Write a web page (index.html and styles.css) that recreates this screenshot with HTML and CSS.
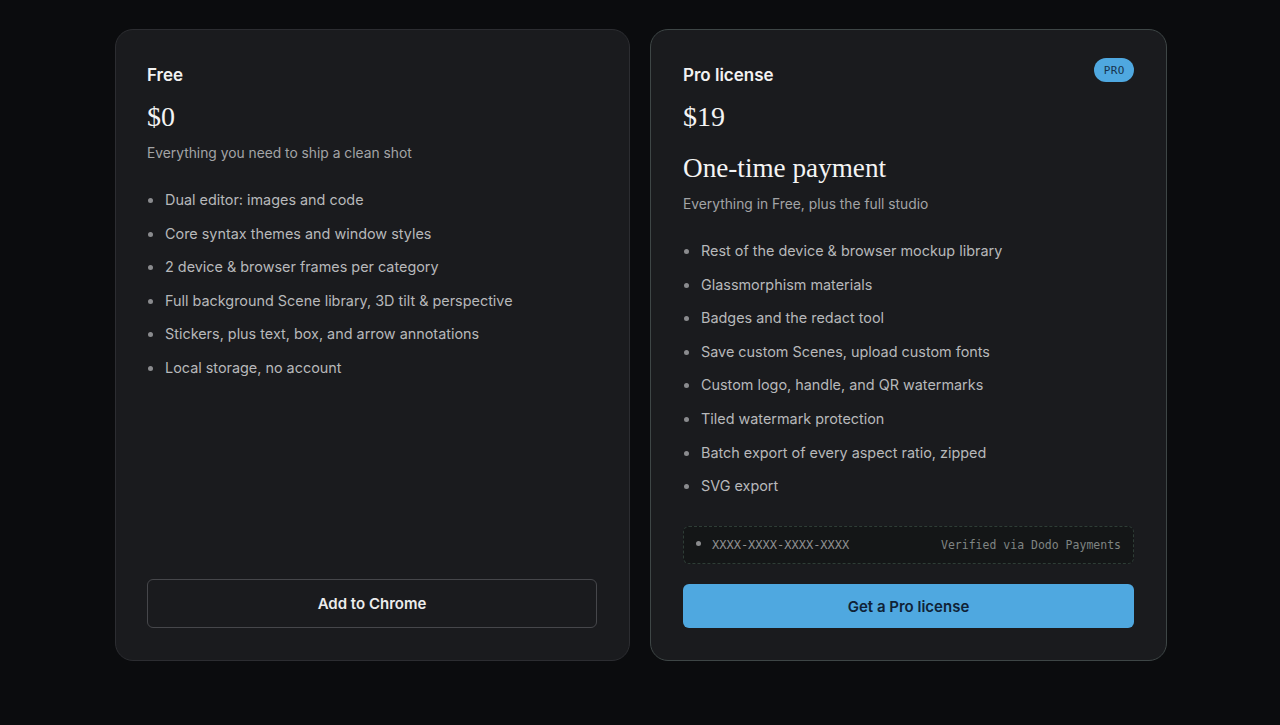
FILE: index.html
```html
<!DOCTYPE html>
<html lang="en">
<head>
    <meta charset="UTF-8">
    <meta name="viewport" content="width=device-width, initial-scale=1.0">
    <title>Pricing</title>
    <link rel="stylesheet" href="styles.css">
</head>
<body>

<div class="plans">
    <!-- Free plan -->
    <div class="plan">
        <div class="plan-head">
            <h3>Free</h3>
        </div>
        <div class="price">$0</div>
        <p class="plan-desc">Everything you need to ship a clean shot</p>
        <ul class="features">
            <li>Dual editor: images and code</li>
            <li>Core syntax themes and window styles</li>
            <li>2 device &amp; browser frames per category</li>
            <li>Full background Scene library, 3D tilt &amp; perspective</li>
            <li>Stickers, plus text, box, and arrow annotations</li>
            <li>Local storage, no account</li>
        </ul>
        <div class="plan-foot">
            <button class="btn btn-outline">Add to Chrome</button>
        </div>
    </div>

    <!-- Pro plan -->
    <div class="plan plan-pro">
        <div class="plan-head">
            <h3>Pro license</h3>
            <span class="badge">PRO</span>
        </div>
        <div class="price">$19</div>
        <div class="price-note">One-time payment</div>
        <p class="plan-desc">Everything in Free, plus the full studio</p>
        <ul class="features">
            <li>Rest of the device &amp; browser mockup library</li>
            <li>Glassmorphism materials</li>
            <li>Badges and the redact tool</li>
            <li>Save custom Scenes, upload custom fonts</li>
            <li>Custom logo, handle, and QR watermarks</li>
            <li>Tiled watermark protection</li>
            <li>Batch export of every aspect ratio, zipped</li>
            <li>SVG export</li>
        </ul>
        <div class="plan-foot">
            <div class="license-key">
                <span class="key-dot"></span>
                <span class="key-text">XXXX-XXXX-XXXX-XXXX</span>
                <span class="key-note">Verified via Dodo Payments</span>
            </div>
            <button class="btn btn-primary">Get a Pro license</button>
        </div>
    </div>
</div>

</body>
</html>
```

FILE: styles.css
```css
/* Dark pricing page */
body {
    font-family: Inter, "Noto Sans", sans-serif;
    background-color: #0b0c0e;
    color: #f0f0f0;
    margin: 0;
    min-height: 100vh;
}
.plans {
    display: grid;
    grid-template-columns: 515px 517px;
    gap: 20px;
    margin: 0 0 0 115px;
    padding-top: 29px;
}
.plan {
    display: flex;
    flex-direction: column;
    background-color: #1a1b1e;
    border: 1px solid #2c2d31;
    border-radius: 18px;
    padding: 32px 32px 32px 31px;
    min-height: 566px;
}
.plan-pro {
    border-color: #3e4646;
    padding-left: 32px;
}
.plan-head {
    display: flex;
    justify-content: space-between;
    align-items: center;
    height: 26px;
}
.plan-head h3 {
    font-size: 17px;
    font-weight: 600;
    margin: 0;
    color: #f2f2f2;
}
.badge {
    font-family: "DejaVu Sans Mono", monospace;
    font-size: 11px;
    line-height: 13px;
    letter-spacing: 0.5px;
    color: #16344e;
    background-color: #4fa8e0;
    border-radius: 12px;
    padding: 6px 9px 5px 9.5px;
    margin-top: -11px;
}
.price {
    font-family: "Liberation Serif", serif;
    font-size: 28px;
    color: #f4f4f4;
    margin-top: 12px;
    line-height: 34px;
}
.price-note {
    font-family: "Liberation Serif", serif;
    font-size: 27.2px;
    color: #f4f4f4;
    margin-top: 17px;
    line-height: 34px;
}
.plan-desc {
    font-size: 13.8px;
    color: #a3a4a6;
    margin: 9px 0 0;
    line-height: 20px;
}
.features {
    list-style: none;
    padding: 0;
    margin: 27px 0 0;
}
.features li {
    position: relative;
    font-size: 14.4px;
    color: #b7b8ba;
    padding-left: 18px;
    line-height: 20px;
    margin-bottom: 13.6px;
}
.features li::before {
    content: "";
    position: absolute;
    left: 1px;
    top: 8px;
    width: 5px;
    height: 5px;
    border-radius: 50%;
    background-color: #8a8b8e;
}
.plan-foot {
    margin-top: auto;
    display: flex;
    flex-direction: column;
    gap: 20px;
}
.license-key {
    display: flex;
    align-items: center;
    height: 36px;
    padding: 0 12px;
    border: 1px dashed #2e3d36;
    border-radius: 6px;
    background-color: #141617;
    font-family: "DejaVu Sans Mono", monospace;
    font-size: 12px;
    color: #8f9092;
}
.key-dot {
    width: 5px;
    height: 5px;
    border-radius: 50%;
    background-color: #8a8b8d;
    margin-right: 11px;
    margin-top: -4px;
}
.key-note {
    margin-left: auto;
    font-size: 11.5px;
    color: #7f8482;
}
.btn {
    font-family: Inter, "Noto Sans", sans-serif;
    font-size: 15px;
    font-weight: 600;
    border-radius: 6px;
    cursor: pointer;
    width: 100%;
}
.btn-outline {
    height: 49px;
    background-color: transparent;
    color: #ececec;
    border: 1px solid #46474b;
}
.btn-primary {
    height: 44px;
    background-color: #4fa8e0;
    color: #102236;
    border: none;
}
```
